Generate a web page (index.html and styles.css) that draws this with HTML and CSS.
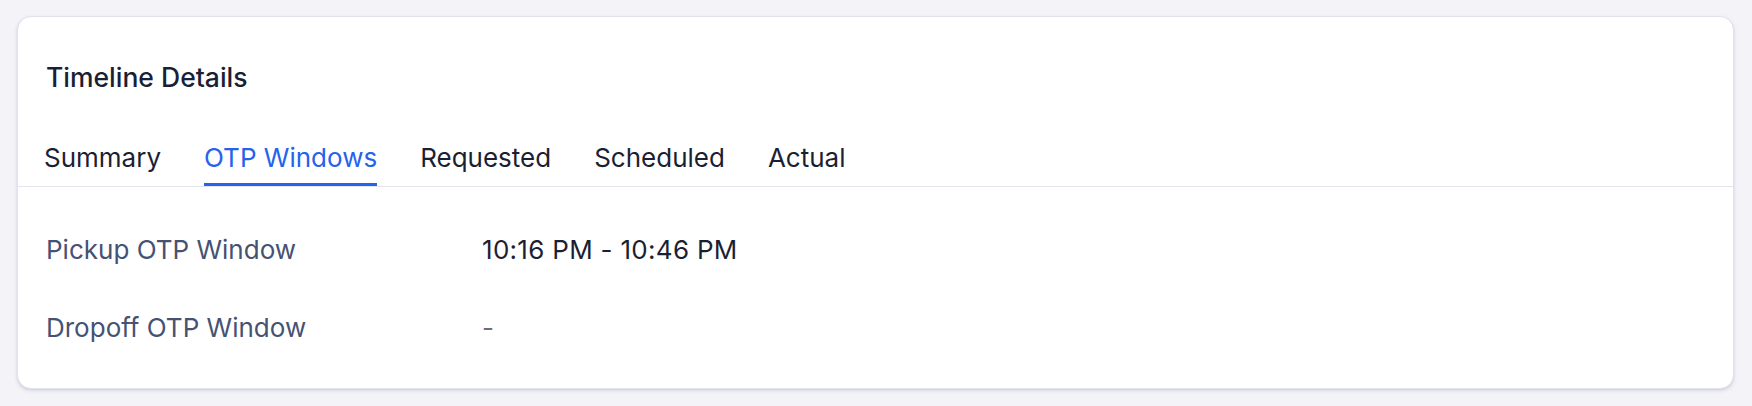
FILE: index.html
```html
<!DOCTYPE html>
<html lang="en">
<head>
<meta charset="utf-8">
<title>Timeline Details</title>
<link rel="stylesheet" href="styles.css">
</head>
<body>
<section class="card">
  <h2 class="card-title">Timeline Details</h2>
  <nav class="tabs">
    <span class="tab">Summary</span>
    <span class="tab tab-active">OTP Windows</span>
    <span class="tab">Requested</span>
    <span class="tab">Scheduled</span>
    <span class="tab">Actual</span>
  </nav>
  <div class="details">
    <div class="row">
      <span class="label">Pickup OTP Window</span>
      <span class="value">10:16 PM - 10:46 PM</span>
    </div>
    <div class="row">
      <span class="label">Dropoff OTP Window</span>
      <span class="value value-empty">-</span>
    </div>
  </div>
</section>
</body>
</html>
```

FILE: styles.css
```css
* { box-sizing: border-box; }

html, body {
  margin: 0;
  padding: 0;
}

body {
  background: #f3f3f8;
  padding: 16px 18px 17px 17px;
  font-family: Inter, "Noto Sans", sans-serif;
  color: #1c1f33;
}

.card {
  background: #ffffff;
  border: 1px solid #e2e2ef;
  border-radius: 14px;
  box-shadow: 0 2px 4px rgba(70, 70, 130, 0.12), 0 1px 2px rgba(70, 70, 130, 0.10);
  overflow: hidden;
}

.card-title {
  margin: 0;
  padding: 44px 0 0 28px;
  font-size: 26.5px;
  line-height: 32px;
  font-weight: 550;
  color: #1b1f35;
}

.tabs {
  display: flex;
  gap: 43px;
  margin-top: 49px;
  padding-left: 26px;
  border-bottom: 1px solid #e4e4ef;
}

.tab {
  font-size: 26px;
  line-height: 32px;
  padding-bottom: 9px;
  border-bottom: 3px solid transparent;
  color: #1c1f33;
}

.tab-active {
  color: #2563eb;
  border-bottom-color: #2563eb;
}

.details {
  padding: 24px 0 21px 28px;
}

.row {
  display: grid;
  grid-template-columns: 436px 1fr;
  padding: 23px 0;
  font-size: 26px;
  line-height: 32px;
}

.label {
  color: #465174;
}

.value {
  color: #1c1f33;
  letter-spacing: 0.3px;
}

.value-empty {
  color: #6e6e76;
}
```
